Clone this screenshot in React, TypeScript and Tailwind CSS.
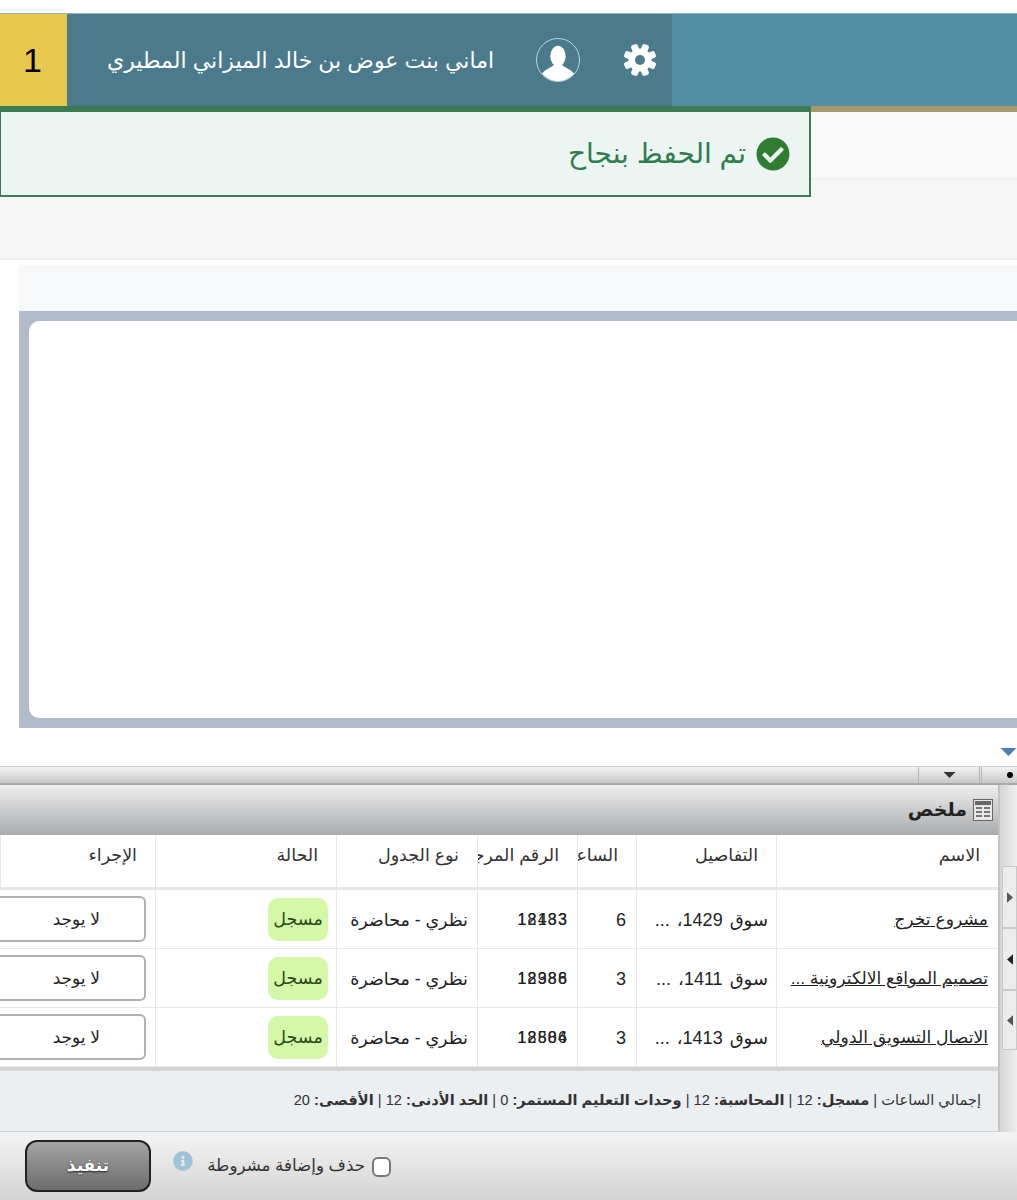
import React from "react";
import { FaCheckCircle, FaInfoCircle } from "react-icons/fa";

const font = "font-['Liberation_Sans','DejaVu_Sans',sans-serif]";

const Tri = ({ dir, color, className }: { dir: "down" | "left" | "right"; color: string; className?: string }) => {
  const pts = dir === "down" ? "0,0 16,0 8,8" : dir === "left" ? "8,0 8,14 0,7" : "0,0 8,7 0,14";
  const box = dir === "down" ? "0 0 16 8" : "0 0 8 14";
  return (
    <svg viewBox={box} className={className}>
      <polygon points={pts} fill={color} />
    </svg>
  );
};

const Gear = () => (
  <svg viewBox="0 0 34 34" className="w-[34px] h-[34px]">
    {[0, 45, 90, 135].map((a) => (
      <rect key={a} x="13.5" y="0.5" width="7" height="33" rx="2" fill="#fff" transform={`rotate(${a + 22.5} 17 17)`} />
    ))}
    <circle cx="17" cy="17" r="11.5" fill="#fff" />
    <circle cx="17" cy="17" r="5" fill="#4a7a8b" />
  </svg>
);

const rows = [
  { name: "مشروع تخرج", details: "سوق 1429، ...", hours: "6", a: "18483", b: "12133" },
  { name: "تصميم المواقع الالكترونية ...", details: "سوق 1411، ...", hours: "3", a: "12386", b: "18988" },
  { name: "الاتصال التسويق الدولي", details: "سوق 1413، ...", hours: "3", a: "18884", b: "12506" },
];

const headers = ["الاسم", "التفاصيل", "الساعات", "الرقم المرجعي", "نوع الجدول", "الحالة", "الإجراء"];

const cols = "grid grid-cols-[222px_140px_59px_100px_141px_181px_155px]";

const Summary = () => (
  <p className="text-[14.65px] text-[#333] pr-[17px] whitespace-nowrap">
    إجمالي الساعات | <b className="font-bold">مسجل:</b> 12 | <b className="font-bold">المحاسبة:</b> 12 |{" "}
    <b className="font-bold">وحدات التعليم المستمر:</b> 0 | <b className="font-bold">الحد الأدنى:</b> 12 |{" "}
    <b className="font-bold">الأقصى:</b> 20
  </p>
);

export default function App() {
  return (
    <div className={`relative w-[1017px] h-[1200px] overflow-hidden bg-white ${font}`}>
      <div className="h-[13px]" />

      <div className="flex h-[93px] border-t border-[#8fb4c2]">
        <div className="w-[67px] bg-[#e8c84d] flex items-center justify-center pr-[2px] text-[34px] text-black">1</div>
        <div className="w-[605px] bg-[#4a7a8b] flex items-center justify-between pl-[40px] pr-[15px]">
          <span dir="rtl" className="text-[22px] text-white whitespace-nowrap">
            اماني بنت عوض بن خالد الميزاني المطيري
          </span>
          <div className="flex items-center gap-[43px]">
            <div className="w-[44px] h-[44px] rounded-full border border-[#b9d6e0] overflow-hidden">
              <svg viewBox="0 0 44 44" className="w-full h-full">
                <ellipse cx="22" cy="18" rx="8" ry="11" fill="#fff" />
                <path d="M2 40 C8 31 16 30 19 26 L25 26 C28 30 36 31 42 40 C36 46 8 46 2 40 Z" fill="#fff" />
              </svg>
            </div>
            <Gear />
          </div>
        </div>
        <div className="flex-1 bg-[#528ea3]" />
      </div>
      <div className="h-[6px] bg-[#a89a6e]" />

      <div className="absolute left-0 top-[106px] w-[811px] h-[91px] bg-[#ecf5f1] border border-[#3a7d53] border-t-[6px] border-b-2 border-r-2 flex items-center justify-end pr-[19px] gap-[10px]">
        <span dir="rtl" className="text-[28px] text-[#2f7d4f] whitespace-nowrap">تم الحفظ بنجاح</span>
        <FaCheckCircle className="w-[34px] h-[34px] text-[#2e7d32]" />
      </div>

      <div className="h-[68px] bg-[#f8f8f8] border-b-2 border-[#f1f1f1]" />
      <div className="h-[80px] bg-[#f6f6f6] border-b-2 border-[#eeeeee]" />

      <div className="pl-[19px] pt-[5px]">
        <div className="h-[46px] bg-[#f7f8fa]" />
        <div className="h-[417px] bg-[#b0bac9] py-[10px] pl-[10px]">
          <div className="h-full bg-white rounded-l-[10px]" />
        </div>
      </div>

      <div className="h-[38px] flex justify-end items-start pt-[20px]">
        <Tri dir="down" color="#4f7db3" className="w-[17px] h-[8px]" />
      </div>

      <div className="h-[19px] flex justify-end bg-gradient-to-b from-[#f2f2f2] to-[#c9c9c9] border-t border-[#cfcfcf] border-b-2 border-b-[#a9a9a9]">
        <div className="w-[62px] mr-[1px] border-l border-r border-[#b5b5b5] flex items-center justify-center">
          <Tri dir="down" color="#333" className="w-[13px] h-[6px]" />
        </div>
        <div className="w-[36px] border-l border-[#b5b5b5] flex items-center justify-end pr-[4px]">
          <span className="block w-[6px] h-[6px] rounded-full bg-black" />
        </div>
      </div>

      <div className="flex h-[347px]">
        <div dir="rtl" className="w-[998px] flex flex-col overflow-hidden">
          <div className="h-[50px] shrink-0 bg-gradient-to-b from-[#efefef] to-[#a9abad] flex items-center pr-[5px] gap-[6px]">
            <svg viewBox="0 0 20 22" className="w-[20px] h-[22px]">
              <rect x="0.5" y="0.5" width="19" height="21" fill="#e8e8e8" stroke="#666" />
              <rect x="2" y="2" width="16" height="4" fill="#666" />
              <path d="M3 9h6M11 9h6M3 13h6M11 13h6M3 17h6M11 17h6" stroke="#777" strokeWidth="2" />
            </svg>
            <span className="text-[19px] font-bold text-[#222]">ملخص</span>
          </div>

          <div className={`${cols} h-[55px] shrink-0 border-b-[3px] border-[#e6e6e6] text-[17.5px] text-[#333]`}>
            {headers.map((h) => (
              <div key={h} className="border-l border-[#e8e8e8] overflow-hidden whitespace-nowrap pt-[7px] pr-[18px]">
                {h}
              </div>
            ))}
          </div>

          {rows.map((r) => (
            <div key={r.a} className={`${cols} h-[59px] shrink-0 border-b border-[#e8e8e8] text-[17.2px] text-[#222]`}>
              <div className="border-l border-[#e8e8e8] flex items-center pt-[2px] pr-[10px]">
                <span className="underline whitespace-nowrap">{r.name}</span>
              </div>
              <div className="border-l border-[#e8e8e8] flex items-center pt-[2px] pr-[8px] whitespace-nowrap text-[18px] [word-spacing:2px]">{r.details}</div>
              <div className="border-l border-[#e8e8e8] flex items-center pt-[2px] pr-[10px] text-[18px]">{r.hours}</div>
              <div className="border-l border-[#e8e8e8] flex items-center pt-[2px] pr-[9px]">
                <span dir="ltr" className="relative text-[16px] tracking-[1.2px]">
                  {r.a}
                  <span className="absolute left-0 top-0">{r.b}</span>
                </span>
              </div>
              <div className="border-l border-[#e8e8e8] flex items-center pt-[2px] pr-[9px] text-[17.5px] whitespace-nowrap">نظري - محاضرة</div>
              <div className="border-l border-[#e8e8e8] flex items-center pr-[8px]">
                <span className="w-[60px] h-[43px] rounded-[10px] bg-[#d5f7a8] flex items-center justify-center text-[17.5px] text-[#2b4a1c]">
                  مسجل
                </span>
              </div>
              <div className="flex items-center pr-[9px]">
                <div className="w-[160px] shrink-0 h-[46px] rounded-[6px] border-2 border-[#b0b0b0] bg-white flex items-center pt-[2px] pr-[44px] text-[17px]">
                  لا يوجد
                </div>
              </div>
            </div>
          ))}

          <div className="h-[4px] shrink-0 bg-[#d4d4d4]" />
          <div className="flex-1 bg-[#eceff2] border-b border-[#cfd2d5] flex items-center">
            <Summary />
          </div>
        </div>

        <div className="flex-1 bg-gradient-to-r from-[#d5d5d5] to-[#efefef] border-l-2 border-[#c4c4c4] pt-[81px] flex flex-col items-end">
          <div className="w-[15px] h-[62px] bg-[#ececec] border border-[#c9c9c9] flex items-center justify-center">
            <Tri dir="right" color="#555" className="w-[6px] h-[13px]" />
          </div>
          <div className="w-[15px] h-[62px] bg-[#ececec] border border-[#c9c9c9] flex items-center justify-center">
            <Tri dir="left" color="#222" className="w-[6px] h-[13px]" />
          </div>
          <div className="w-[15px] h-[60px] bg-[#ececec] border border-[#c9c9c9] flex items-center justify-center">
            <Tri dir="left" color="#555" className="w-[6px] h-[13px]" />
          </div>
        </div>
      </div>

      <div className="h-[68px] bg-gradient-to-b from-[#f4f4f4] to-[#d4d4d4] flex items-center pl-[25px]">
        <button className="w-[126px] h-[52px] rounded-[12px] border-2 border-[#222] bg-gradient-to-b from-[#a5a5a5] to-[#6c6c6c] text-white text-[17px] font-bold [text-shadow:0_1px_2px_#222]">
          تنفيذ
        </button>
        <FaInfoCircle className="ml-[22px] mb-[10px] w-[20px] h-[20px] text-[#9cc4d4]" />
        <span dir="rtl" className="ml-[14px] w-[158px] text-[16.7px] text-[#333] whitespace-nowrap">حذف وإضافة مشروطة</span>
        <span className="ml-[7px] mt-[2px] w-[19px] h-[20px] rounded-[6px] border-2 border-[#777] bg-white" />
      </div>
    </div>
  );
}
